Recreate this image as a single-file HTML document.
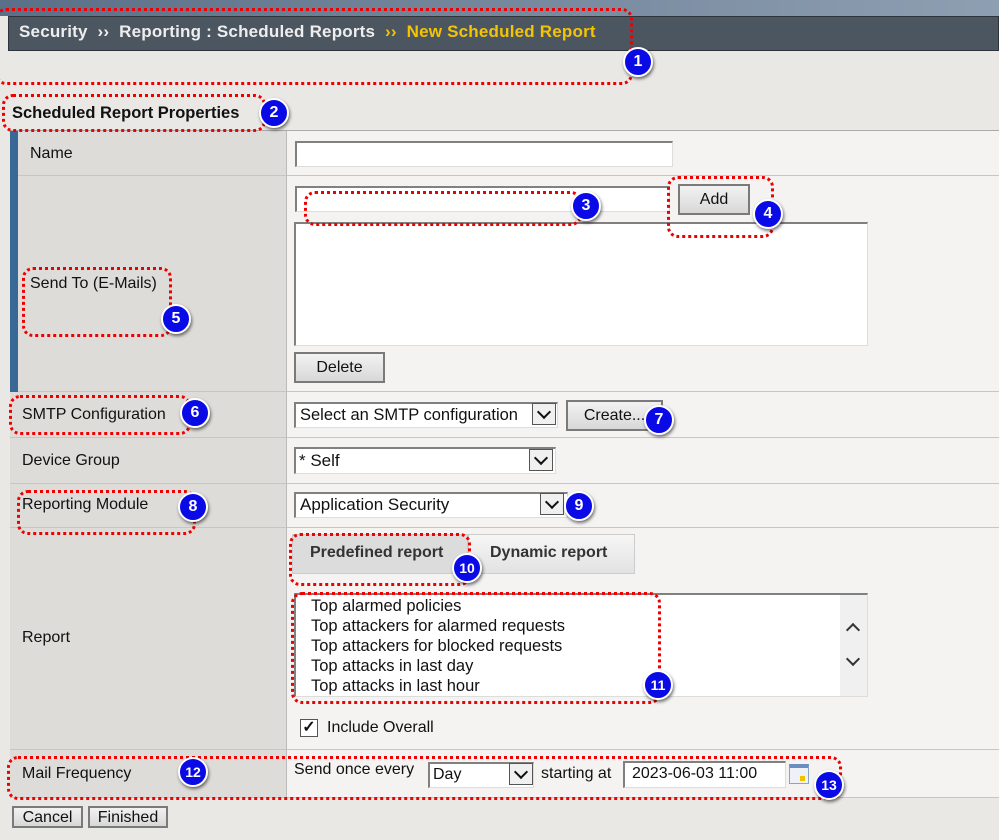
<!DOCTYPE html>
<html><head><meta charset="utf-8"><style>
*{box-sizing:border-box;margin:0;padding:0}
body{width:999px;height:840px;overflow:hidden;background:#e9e8e4;font-family:"Liberation Sans",Arial,sans-serif;font-size:16px;color:#111;position:relative}
.a{position:absolute}
.lbl{position:absolute;left:10px;width:276px;background:#dedcd8;border-bottom:1px solid #c8c6c2}
.val{position:absolute;left:286px;width:713px;background:#f4f3f1;border-bottom:1px solid #c8c6c2;border-left:1px solid #bbb}
.t{position:absolute;white-space:nowrap}
.inp{position:absolute;background:#fff;border-top:2px solid #808080;border-left:2px solid #808080;border-right:1px solid #ddd;border-bottom:1px solid #ddd}
.btn{position:absolute;background:linear-gradient(#f2f2f2,#d8d8d8);border:2px solid #7a7a7a;text-align:center;font-size:16px}
.dd{position:absolute;width:24px;height:22px;border:1px solid #555;background:#f0f0f0}
.dd:after{content:"";position:absolute;left:6px;top:3px;width:8px;height:8px;border-right:2px solid #111;border-bottom:2px solid #111;transform:rotate(45deg)}
.b{position:absolute;width:30px;height:30px;border-radius:50%;background:#0a0ae6;border:2px solid #fff;box-shadow:1px 2px 3px rgba(0,0,0,.55);color:#fff;font-weight:bold;font-size:16px;text-align:center;line-height:26px}
.r{position:absolute;border:3px dotted #e00;border-radius:11px}
.chev{position:absolute;width:10px;height:10px;border-left:2px solid #333;border-top:2px solid #333}
</style></head><body>
<div class="a" style="left:0;top:0;width:999px;height:16px;background:linear-gradient(90deg,#5a7088,#8f9fb2)"></div>
<div class="a" style="left:8px;top:16px;width:991px;height:35px;background:#4c5660;border:1px solid #2e343a"></div>
<div class="t" style="left:19px;top:22px;font-weight:bold;font-size:17px;color:#eee;letter-spacing:0.2px">Security &nbsp;›› &nbsp;Reporting : Scheduled Reports &nbsp;<span style="color:#f5c400">›› &nbsp;New Scheduled Report</span></div>
<div class="t" style="left:12px;top:104px;font-weight:bold;font-size:16.5px">Scheduled Report Properties</div>
<div class="a" style="left:10px;top:130px;width:989px;height:1px;background:#aaa"></div>

<div class="lbl" style="top:131px;height:45px"></div><div class="val" style="top:131px;height:45px"></div>
<div class="lbl" style="top:176px;height:216px"></div><div class="val" style="top:176px;height:216px"></div>
<div class="a" style="left:10px;top:131px;width:8px;height:261px;background:#3a6896"></div>
<div class="lbl" style="top:392px;height:46px"></div><div class="val" style="top:392px;height:46px"></div>
<div class="lbl" style="top:438px;height:46px"></div><div class="val" style="top:438px;height:46px"></div>
<div class="lbl" style="top:484px;height:44px"></div><div class="val" style="top:484px;height:44px"></div>
<div class="lbl" style="top:528px;height:222px"></div><div class="val" style="top:528px;height:222px"></div>
<div class="lbl" style="top:750px;height:48px"></div><div class="val" style="top:750px;height:48px"></div>

<div class="t" style="left:30px;top:145px">Name</div>
<div class="t" style="left:30px;top:275px">Send To (E-Mails)</div>
<div class="t" style="left:22px;top:406px">SMTP Configuration</div>
<div class="t" style="left:22px;top:452px">Device Group</div>
<div class="t" style="left:22px;top:496px">Reporting Module</div>
<div class="t" style="left:22px;top:629px">Report</div>
<div class="t" style="left:22px;top:765px">Mail Frequency</div>

<div class="inp" style="left:295px;top:141px;width:378px;height:26px"></div>
<div class="inp" style="left:295px;top:186px;width:375px;height:26px"></div>
<div class="btn" style="left:678px;top:184px;width:72px;height:31px;line-height:27px">Add</div>
<div class="inp" style="left:294px;top:222px;width:574px;height:124px"></div>
<div class="btn" style="left:294px;top:352px;width:91px;height:31px;line-height:27px">Delete</div>

<div class="inp" style="left:294px;top:402px;width:264px;height:26px"></div>
<div class="t" style="left:300px;top:406px;font-size:16.5px">Select an SMTP configuration</div>
<div class="dd" style="left:532px;top:403px"></div>
<div class="btn" style="left:566px;top:400px;width:97px;height:31px;line-height:27px">Create...</div>

<div class="inp" style="left:294px;top:447px;width:262px;height:27px"></div>
<div class="t" style="left:299px;top:451px;font-size:17px">* Self</div>
<div class="dd" style="left:529px;top:449px"></div>

<div class="inp" style="left:294px;top:492px;width:274px;height:26px"></div>
<div class="t" style="left:300px;top:495px;font-size:17px">Application Security</div>
<div class="dd" style="left:540px;top:493px"></div>

<div class="a" style="left:292px;top:534px;width:176px;height:40px;background:#dcdcdc;border:1px solid #ccc"></div>
<div class="a" style="left:468px;top:534px;width:167px;height:40px;background:linear-gradient(#f6f6f6,#e2e2e2);border:1px solid #ccc"></div>
<div class="t" style="left:310px;top:544px;font-weight:bold;color:#333">Predefined report</div>
<div class="t" style="left:490px;top:544px;font-weight:bold;color:#333">Dynamic report</div>

<div class="inp" style="left:294px;top:593px;width:574px;height:104px"></div>
<div class="a" style="left:840px;top:595px;width:27px;height:101px;background:#f0f0f0"></div>
<div class="chev" style="left:848px;top:625px;transform:rotate(45deg)"></div>
<div class="chev" style="left:848px;top:654px;transform:rotate(225deg)"></div>
<div class="t" style="left:311px;top:596px;line-height:20px;font-size:16.5px">Top alarmed policies<br>Top attackers for alarmed requests<br>Top attackers for blocked requests<br>Top attacks in last day<br>Top attacks in last hour</div>

<div class="a" style="left:300px;top:719px;width:18px;height:18px;background:#fff;border:1px solid #555;font-size:16px;line-height:16px;text-align:center;font-weight:bold">✓</div>
<div class="t" style="left:327px;top:719px">Include Overall</div>

<div class="t" style="left:294px;top:761px">Send once every</div>
<div class="inp" style="left:428px;top:762px;width:106px;height:26px"></div>
<div class="t" style="left:433px;top:766px">Day</div>
<div class="dd" style="left:509px;top:763px"></div>
<div class="t" style="left:541px;top:765px">starting at</div>
<div class="inp" style="left:623px;top:761px;width:163px;height:27px"></div>
<div class="t" style="left:632px;top:765px">2023-06-03 11:00</div>
<div class="a" style="left:789px;top:764px;width:20px;height:20px;background:#eef2f8;border:1px solid #8aa4c8;border-top:4px solid #6a8ec0"><div class="a" style="left:10px;top:8px;width:5px;height:5px;background:#f2c200"></div></div>

<div class="btn" style="left:12px;top:806px;width:71px;height:22px;line-height:19px;font-size:16px">Cancel</div>
<div class="btn" style="left:88px;top:806px;width:80px;height:22px;line-height:19px;font-size:16px">Finished</div>

<div class="r" style="left:-5px;top:8px;width:638px;height:77px"></div>
<div class="r" style="left:2px;top:94px;width:264px;height:38px"></div>
<div class="r" style="left:304px;top:191px;width:278px;height:35px"></div>
<div class="r" style="left:667px;top:176px;width:107px;height:62px"></div>
<div class="r" style="left:22px;top:267px;width:150px;height:70px"></div>
<div class="r" style="left:9px;top:395px;width:182px;height:40px"></div>
<div class="r" style="left:17px;top:490px;width:179px;height:45px"></div>
<div class="r" style="left:289px;top:533px;width:182px;height:53px"></div>
<div class="r" style="left:291px;top:592px;width:370px;height:112px"></div>
<div class="r" style="left:7px;top:756px;width:835px;height:44px"></div>

<div class="b" style="left:623px;top:47px">1</div>
<div class="b" style="left:259px;top:98px">2</div>
<div class="b" style="left:571px;top:191px">3</div>
<div class="b" style="left:753px;top:199px">4</div>
<div class="b" style="left:161px;top:304px">5</div>
<div class="b" style="left:180px;top:398px">6</div>
<div class="b" style="left:644px;top:405px">7</div>
<div class="b" style="left:178px;top:492px">8</div>
<div class="b" style="left:564px;top:491px">9</div>
<div class="b" style="left:452px;top:553px;font-size:14px">10</div>
<div class="b" style="left:643px;top:670px;font-size:14px">11</div>
<div class="b" style="left:178px;top:757px;font-size:14px">12</div>
<div class="b" style="left:814px;top:770px;font-size:14px">13</div>
</body></html>
